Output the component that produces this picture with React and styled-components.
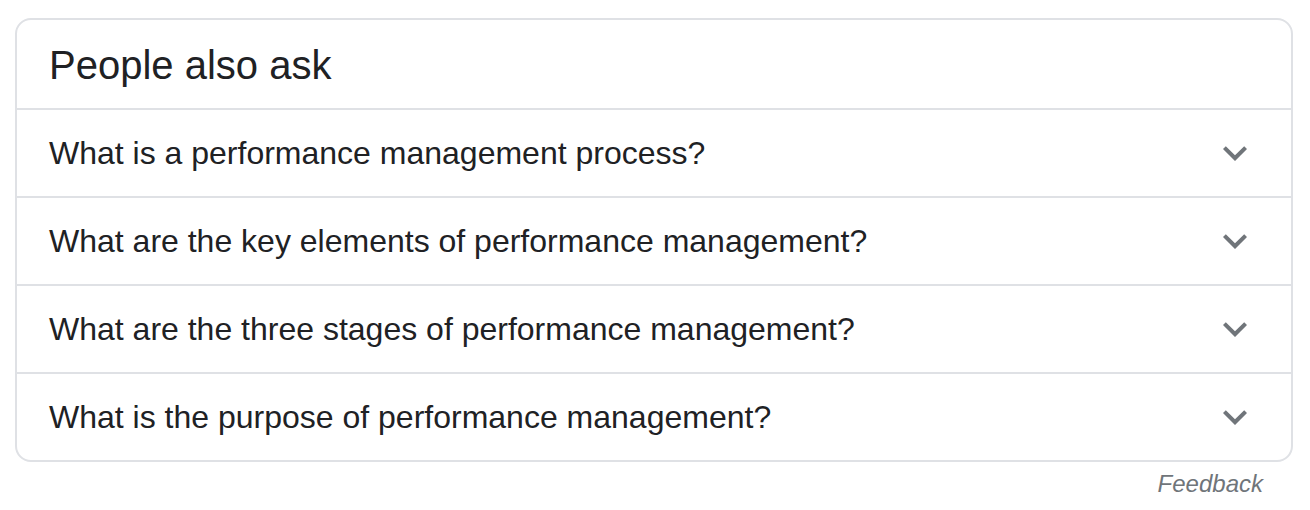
import React from "react";
import styled, { createGlobalStyle } from "styled-components";

const GlobalStyle = createGlobalStyle`
  body {
    margin: 0;
    background: #fff;
    font-family: "Liberation Sans", Arial, sans-serif;
  }
`;

const Page = styled.div`
  padding: 18px 17px 0 15px;
`;

const Card = styled.div`
  border: 2px solid #dfe1e5;
  border-radius: 16px;
  overflow: hidden;
`;

const Header = styled.div`
  height: 90px;
  box-sizing: border-box;
  padding: 22px 32px 0;
  font-size: 40px;
  line-height: 46px;
  color: #202124;
  border-bottom: 2px solid #dfe1e5;
`;

const Row = styled.div`
  display: flex;
  align-items: center;
  justify-content: space-between;
  height: 86px;
  padding: 0 32px;
  border-bottom: ${p => (p.last ? "none" : "2px solid #dfe1e5")};
  cursor: pointer;
`;

const Question = styled.div`
  font-size: 32px;
  color: #202124;
`;

const Chevron = styled.svg`
  width: 48px;
  height: 48px;
  fill: #70757a;
  flex: none;
`;

const Footer = styled.div`
  display: flex;
  justify-content: flex-end;
  padding: 8px 30px 0 0;
`;

const Feedback = styled.span`
  font-size: 24px;
  font-style: italic;
  color: #70757a;
`;

const questions = [
  "What is a performance management process?",
  "What are the key elements of performance management?",
  "What are the three stages of performance management?",
  "What is the purpose of performance management?",
];

export default function App() {
  return (
    <Page>
      <GlobalStyle />
      <Card>
        <Header>People also ask</Header>
        {questions.map((q, i) => (
          <Row key={q} last={i === questions.length - 1}>
            <Question>{q}</Question>
            <Chevron viewBox="0 0 24 24">
              <path d="M16.59 8.59L12 13.17 7.41 8.59 6 10l6 6 6-6z" />
            </Chevron>
          </Row>
        ))}
      </Card>
      <Footer>
        <Feedback>Feedback</Feedback>
      </Footer>
    </Page>
  );
}
